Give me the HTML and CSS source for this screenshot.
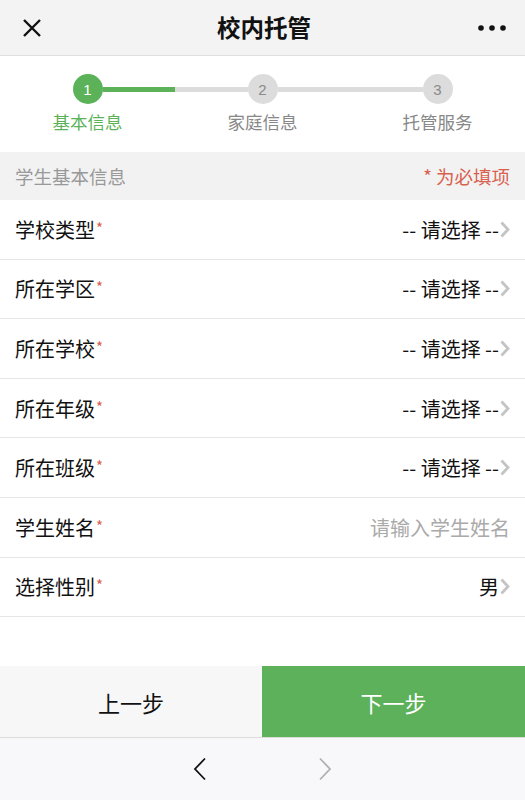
FILE: index.html
```html
<!DOCTYPE html>
<html lang="zh-CN">
<head>
<meta charset="utf-8">
<title>校内托管</title>
<link rel="stylesheet" href="styles.css">
</head>
<body>
<div class="page">
  <header class="topbar">
    <span class="top-icon close">
      <svg width="20" height="20" viewBox="0 0 20 20"><path d="M2 2 L18 18 M18 2 L2 18" stroke="#111" stroke-width="2.4" fill="none" stroke-linecap="butt"/></svg>
    </span>
    <h1 class="title">校内托管</h1>
    <span class="top-icon more">
      <svg width="28" height="8" viewBox="0 0 28 8"><circle cx="3" cy="4" r="2.8" fill="#111"/><circle cx="14" cy="4" r="2.8" fill="#111"/><circle cx="25" cy="4" r="2.8" fill="#111"/></svg>
    </span>
  </header>

  <section class="steps">
    <div class="step active">
      <div class="track"><span class="seg none"></span><span class="dot">1</span><span class="seg green"></span></div>
      <div class="step-label">基本信息</div>
    </div>
    <div class="step">
      <div class="track"><span class="seg gray"></span><span class="dot">2</span><span class="seg gray"></span></div>
      <div class="step-label">家庭信息</div>
    </div>
    <div class="step">
      <div class="track"><span class="seg gray"></span><span class="dot">3</span><span class="seg none"></span></div>
      <div class="step-label">托管服务</div>
    </div>
  </section>

  <div class="section-head">
    <span class="section-title">学生基本信息</span>
    <span class="required-note">* 为必填项</span>
  </div>

  <ul class="form">
    <li class="row"><span class="label">学校类型<i class="star">*</i></span><span class="value">-- 请选择 --<svg class="chev" width="10" height="17" viewBox="0 0 10 17"><path d="M1.5 1.5 L8 8.5 L1.5 15.5" stroke="#c4c4c4" stroke-width="2.8" fill="none"/></svg></span></li>
    <li class="row"><span class="label">所在学区<i class="star">*</i></span><span class="value">-- 请选择 --<svg class="chev" width="10" height="17" viewBox="0 0 10 17"><path d="M1.5 1.5 L8 8.5 L1.5 15.5" stroke="#c4c4c4" stroke-width="2.8" fill="none"/></svg></span></li>
    <li class="row"><span class="label">所在学校<i class="star">*</i></span><span class="value">-- 请选择 --<svg class="chev" width="10" height="17" viewBox="0 0 10 17"><path d="M1.5 1.5 L8 8.5 L1.5 15.5" stroke="#c4c4c4" stroke-width="2.8" fill="none"/></svg></span></li>
    <li class="row"><span class="label">所在年级<i class="star">*</i></span><span class="value">-- 请选择 --<svg class="chev" width="10" height="17" viewBox="0 0 10 17"><path d="M1.5 1.5 L8 8.5 L1.5 15.5" stroke="#c4c4c4" stroke-width="2.8" fill="none"/></svg></span></li>
    <li class="row"><span class="label">所在班级<i class="star">*</i></span><span class="value">-- 请选择 --<svg class="chev" width="10" height="17" viewBox="0 0 10 17"><path d="M1.5 1.5 L8 8.5 L1.5 15.5" stroke="#c4c4c4" stroke-width="2.8" fill="none"/></svg></span></li>
    <li class="row"><span class="label">学生姓名<i class="star">*</i></span><span class="value placeholder">请输入学生姓名</span></li>
    <li class="row"><span class="label">选择性别<i class="star">*</i></span><span class="value">男<svg class="chev" width="10" height="17" viewBox="0 0 10 17"><path d="M1.5 1.5 L8 8.5 L1.5 15.5" stroke="#c4c4c4" stroke-width="2.8" fill="none"/></svg></span></li>
  </ul>

  <div class="spacer"></div>

  <div class="actions">
    <button class="btn prev">上一步</button>
    <button class="btn next">下一步</button>
  </div>

  <nav class="browser-bar">
    <svg width="14" height="24" viewBox="0 0 14 24"><path d="M12 1.5 L2 12 L12 22.5" stroke="#111" stroke-width="1.8" fill="none"/></svg>
    <svg width="14" height="24" viewBox="0 0 14 24"><path d="M2 1.5 L12 12 L2 22.5" stroke="#b0b0b0" stroke-width="1.8" fill="none"/></svg>
  </nav>
</div>
</body>
</html>
```

FILE: styles.css
```css
* { box-sizing: border-box; margin: 0; padding: 0; }
html, body { width: 525px; height: 800px; overflow: hidden; }
body {
  font-family: "Noto Sans CJK SC", "Noto Sans", "Liberation Sans", sans-serif;
  color: #111;
  background: #fff;
}
.page { display: flex; flex-direction: column; height: 800px; }

.topbar {
  height: 56px;
  flex: none;
  background: #f3f3f3;
  border-bottom: 1px solid #dedede;
  display: grid;
  grid-template-columns: 60px 1fr 60px;
  align-items: center;
  padding: 0 19px 0 22px;
}
.top-icon { display: flex; align-items: center; }
.close { justify-content: flex-start; }
.more { justify-content: flex-end; }
.title { font-size: 23.5px; font-weight: 700; line-height: 1; color: #111; text-align: center; }

.steps {
  height: 96px;
  flex: none;
  display: grid;
  grid-template-columns: repeat(3, 1fr);
  padding-top: 18px;
  background: #fff;
}
.step { display: flex; flex-direction: column; align-items: center; }
.track { display: flex; align-items: center; width: 100%; height: 30px; }
.seg { flex: 1; height: 5px; }
.seg.green { background: #5bb259; }
.seg.gray { background: #dcdcdc; }
.seg.none { background: transparent; }
.dot {
  width: 30px; height: 30px; border-radius: 50%;
  background: #dcdcdc; color: #8a8a8a;
  font-family: "Liberation Sans", sans-serif;
  font-size: 15px;
  display: flex; align-items: center; justify-content: center;
  flex: none;
}
.step.active .dot { background: #5bb259; color: #fff; }
.step-label { margin-top: 6px; font-size: 17.5px; color: #888; line-height: 24px; }
.step.active .step-label { color: #5bb259; }

.section-head {
  height: 48px;
  flex: none;
  background: #f2f2f3;
  display: flex;
  align-items: center;
  justify-content: space-between;
  padding: 0 15px;
}
.section-title { font-size: 18.5px; color: #999; }
.required-note { font-size: 18.5px; color: #d9604e; }

.form { list-style: none; flex: none; }
.row {
  height: 59.6px;
  border-bottom: 1px solid #e6e6e6;
  display: flex;
  align-items: center;
  justify-content: space-between;
  padding: 0 15px;
  font-size: 20px;
}
.label { color: #111; }
.star { font-style: normal; color: #d9604e; font-size: 15px; vertical-align: 4px; margin-left: 1px; }
.value { display: flex; align-items: center; color: #111; }
.value .chev { margin-left: 1px; }
.value.placeholder { color: #aaa; }

.spacer { flex: 1; }

.actions { height: 71px; flex: none; display: flex; }
.btn {
  border: none;
  font-family: inherit;
  font-size: 22px;
  flex: none;
}
.btn.prev { width: 262px; background: #f7f7f7; color: #111; }
.btn.next { flex: 1; background: #5db15a; color: #fff; }

.browser-bar {
  height: 63px;
  flex: none;
  border-top: 1px solid #dcdcdc;
  background: #f8f8fa;
  display: flex;
  align-items: center;
  justify-content: center;
  gap: 111px;
}
```
